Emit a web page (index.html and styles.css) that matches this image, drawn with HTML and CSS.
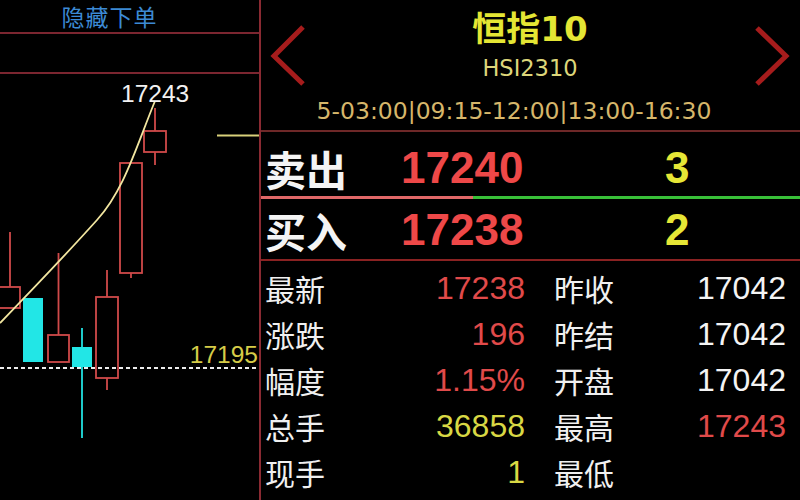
FILE: index.html
```html
<!DOCTYPE html>
<html lang="zh-CN">
<head>
<meta charset="utf-8">
<title>恒指10</title>
<link rel="stylesheet" href="styles.css">
</head>
<body>
<div class="app">
  <section class="chart-pane">
    <div class="order-toggle">隐藏下单</div>
    <div class="order-blank"></div>
    <div class="chart">
      <svg width="259" height="426" viewBox="0 74 259 426" xmlns="http://www.w3.org/2000/svg">
        <line class="ref-line" x1="217" y1="135.5" x2="259" y2="135.5"/>
        <!-- hollow (up) candles -->
        <g class="up">
          <line x1="10" y1="232" x2="10" y2="287"/>
          <rect x="-2" y="287" width="22" height="21"/>
          <line x1="58.5" y1="253" x2="58.5" y2="335"/>
          <rect x="48" y="335" width="21" height="27"/>
          <line x1="107" y1="270" x2="107" y2="297"/>
          <line x1="107" y1="378" x2="107" y2="390"/>
          <rect x="96" y="297" width="22" height="81"/>
          <line x1="131" y1="273" x2="131" y2="278"/>
          <rect x="120" y="163" width="22" height="110"/>
          <line x1="155" y1="108" x2="155" y2="131"/>
          <line x1="155" y1="152" x2="155" y2="165"/>
          <rect x="144" y="131" width="22" height="21"/>
        </g>
        <!-- filled (down) candles -->
        <g class="down">
          <rect x="23" y="298" width="20" height="64"/>
          <line x1="82" y1="328" x2="82" y2="438"/>
          <rect x="72" y="347" width="20" height="20"/>
        </g>
        <path class="ma" d="M0,323 C30,292 70,250 97,220 S135,150 155,101"/>
        <line class="last-line" x1="0" y1="368" x2="259" y2="368"/>
        <text class="tag-high" x="121" y="102">17243</text>
        <text class="tag-last" x="258" y="363">17195</text>
      </svg>
    </div>
  </section>

  <section class="quote-pane">
    <header class="quote-head">
      <svg class="nav" width="36" height="64" viewBox="0 0 36 64"><polyline points="33,3 4,32 33,60"/></svg>
      <div class="title">
        <div class="name">恒指10</div>
        <div class="code">HSI2310</div>
        <div class="hours">5-03:00|09:15-12:00|13:00-16:30</div>
      </div>
      <svg class="nav" width="36" height="64" viewBox="0 0 36 64"><polyline points="3,4 32,32 3,60"/></svg>
    </header>

    <div class="book-row ask">
      <span class="side">卖出</span>
      <span class="px">17240</span>
      <span class="qty">3</span>
    </div>
    <div class="book-sep"><span class="sell"></span><span class="buy"></span></div>
    <div class="book-row bid">
      <span class="side">买入</span>
      <span class="px">17238</span>
      <span class="qty">2</span>
    </div>

    <div class="stats">
      <span class="k">最新</span><span class="v red">17238</span>
      <span class="k k2">昨收</span><span class="v">17042</span>
      <span class="k">涨跌</span><span class="v red">196</span>
      <span class="k k2">昨结</span><span class="v">17042</span>
      <span class="k">幅度</span><span class="v red">1.15%</span>
      <span class="k k2">开盘</span><span class="v">17042</span>
      <span class="k">总手</span><span class="v yellow">36858</span>
      <span class="k k2">最高</span><span class="v red">17243</span>
      <span class="k">现手</span><span class="v yellow">1</span>
      <span class="k k2">最低</span><span class="v"></span>
    </div>
  </section>
</div>
</body>
</html>
```

FILE: styles.css
```css
* { box-sizing: border-box; }
html, body { margin: 0; padding: 0; background: #000; }
body {
  width: 800px;
  height: 500px;
  overflow: hidden;
  font-family: "Noto Sans CJK SC", "Noto Sans", sans-serif;
  color: #f2f2f2;
}
.app { display: flex; width: 800px; height: 500px; }

/* ---------- left: chart ---------- */
.chart-pane {
  width: 261px;
  flex: none;
  border-right: 2px solid #8a2a32;
  display: flex;
  flex-direction: column;
}
.order-toggle {
  height: 34px;
  border-bottom: 2px solid #7c2630;
  display: flex;
  align-items: center;
  justify-content: center;
  padding-right: 40px;
  font-size: 23px;
  letter-spacing: 1px;
  color: #3c8ad4;
}
.order-blank { height: 40px; border-bottom: 2px solid #7c2630; }
.chart { flex: 1; position: relative; }
.chart svg { display: block; }

.ref-line { stroke: #d8d07a; stroke-width: 2; }
.up line, .up rect { stroke: #d04a4a; stroke-width: 1.8; fill: none; }
.up rect { fill: #000; }
.down line { stroke: #22e0e0; stroke-width: 1.8; }
.down rect { fill: #22e6e6; }
.ma { fill: none; stroke: #f2e6a0; stroke-width: 1.8; }
.last-line { stroke: #ececec; stroke-width: 2.2; stroke-dasharray: 4 3; }
.tag-high {
  font-family: "Liberation Sans", sans-serif;
  font-size: 24.5px;
  fill: #f2f2f2;
}
.tag-last {
  font-family: "Liberation Sans", sans-serif;
  font-size: 24.5px;
  fill: #d6cc48;
  text-anchor: end;
}

/* ---------- right: quote ---------- */
.quote-pane { flex: 1; display: flex; flex-direction: column; }
.quote-head {
  height: 132px;
  flex: none;
  border-bottom: 2px solid #6e2828;
  display: flex;
  align-items: flex-start;
  padding: 0 10px 0 9px;
}
.nav { flex: none; margin-top: 24px; }
.nav polyline { fill: none; stroke: #a61c1c; stroke-width: 5; }
.title { flex: 1; display: flex; flex-direction: column; align-items: center; }
.name {
  margin-top: 9px;
  height: 40px;
  line-height: 40px;
  font-family: "DejaVu Sans", "Noto Sans CJK SC", sans-serif;
  font-size: 34px;
  font-weight: bold;
  color: #e4e634;
}
.code {
  height: 38px;
  line-height: 38px;
  font-family: "DejaVu Sans", sans-serif;
  font-size: 22.5px;
  color: #ddd67a;
}
.hours {
  margin-top: 9px;
  margin-right: 32px;
  height: 30px;
  line-height: 30px;
  font-family: "DejaVu Sans", sans-serif;
  font-size: 23.5px;
  color: #d6b66a;
  white-space: nowrap;
}

.book-row {
  display: grid;
  grid-template-columns: 136px 264px 1fr;
  align-items: center;
  padding-left: 4px;
  flex: none;
}
.ask { height: 64px; padding-top: 8px; }
.bid { height: 62px; padding-top: 2px; border-bottom: 2px solid #8a2222; }
.side { font-size: 41px; font-weight: bold; color: #f4f4f4; line-height: 1; }
.px, .qty {
  font-family: "Liberation Sans", sans-serif;
  font-size: 44px;
  font-weight: bold;
  line-height: 1;
}
.px { color: #ee4848; }
.qty { color: #e6e636; }
.book-sep { display: flex; height: 3px; flex: none; }
.book-sep .sell { width: 212px; background: #e06868; }
.book-sep .buy { flex: 1; background: #38c038; }

.stats {
  display: grid;
  grid-template-columns: 70px 190px 99px 162px;
  grid-auto-rows: 46px;
  align-items: center;
  padding: 4px 0 0 4px;
}
.k { font-size: 30px; color: #f0f0f0; line-height: 1; white-space: nowrap; }
.k2 { padding-left: 29px; }
.v {
  font-family: "Liberation Sans", sans-serif;
  font-size: 32px;
  text-align: right;
  color: #f4f4f4;
  line-height: 1;
}
.v.red { color: #e04a4a; }
.v.yellow { color: #d8d844; }
```
